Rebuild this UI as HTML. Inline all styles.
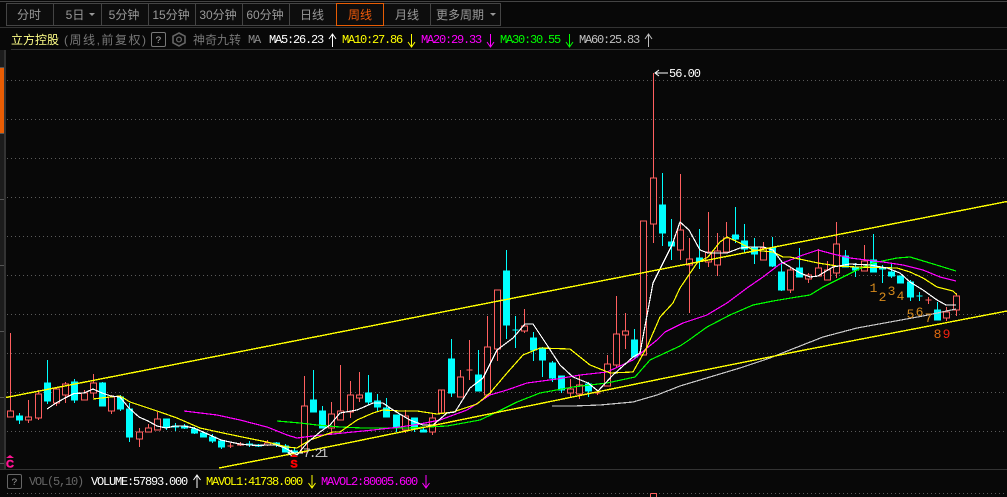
<!DOCTYPE html>
<html><head><meta charset="utf-8"><style>
html,body{margin:0;padding:0;background:#080808;width:1007px;height:497px;overflow:hidden}
svg{display:block}
.c{font-family:"Liberation Sans","Noto Sans CJK SC",sans-serif;font-size:12px}
.m{font-family:"Liberation Mono",monospace;font-size:12px;letter-spacing:-1.2px}
.t{text-anchor:middle;fill:#999}
</style></head><body>
<svg width="1007" height="497" viewBox="0 0 1007 497" xmlns="http://www.w3.org/2000/svg">
<rect width="1007" height="497" fill="#080808"/>
<!-- frame -->
<g shape-rendering="crispEdges">
<rect x="0" y="1" width="1007" height="1" fill="#444"/>
<rect x="0" y="27" width="1007" height="1" fill="#333"/>
<rect x="11" y="49" width="996" height="1" fill="#333"/>
<rect x="0" y="469" width="1007" height="1" fill="#333"/>
<rect x="0" y="50" width="4" height="419" fill="#1c1c1c"/>
<rect x="4" y="50" width="2" height="419" fill="#333"/>
<rect x="0" y="68" width="4" height="65" fill="#e85d04"/>
<rect x="0" y="67" width="4" height="1" fill="#555"/><rect x="0" y="133" width="4" height="1" fill="#555"/><rect x="0" y="199" width="4" height="1" fill="#555"/><rect x="0" y="265" width="4" height="1" fill="#555"/><rect x="0" y="331" width="4" height="1" fill="#555"/><rect x="0" y="397" width="4" height="1" fill="#555"/><rect x="0" y="463" width="4" height="1" fill="#555"/>
<!-- toolbar -->
<rect x="6.5" y="3.5" width="494" height="22" fill="#0d0d0d" stroke="#444"/>
<path d="M53.5 4V25M101.5 4V25M148.5 4V25M195.5 4V25M242.5 4V25M289.5 4V25M430.5 4V25" stroke="#444" fill="none"/>
<rect x="336.5" y="3.5" width="47" height="22" fill="#0d0d0d" stroke="#e85d04"/>
<!-- grid -->
<g stroke="#5a5a5a" stroke-dasharray="1 3" fill="none">
<path d="M7 80.5H1007M7 119.5H1007M7 158.5H1007M7 197.5H1007M7 236.5H1007M7 275.5H1007M7 314.5H1007M7 353.5H1007M7 392.5H1007M7 431.5H1007M7 493.5H1007"/>
</g>
<!-- red candles -->
<path fill="#080808" stroke="#ff5f5f" d="M10.5 333V411M7.5 411H13.5V417H7.5Z
M28.5 400V417M28.5 420V423M25.5 417H31.5V420H25.5Z
M38.5 390V394M38.5 418V420M35.5 394H41.5V418H35.5Z
M56.5 387V389M56.5 403V406M53.5 389H59.5V403H53.5Z
M65.5 382V384M65.5 395V403M62.5 384H68.5V395H62.5Z
M84.5 390V393M81.5 393H87.5V400H81.5Z
M93.5 374V383M93.5 393V398M90.5 383H96.5V393H90.5Z
M111.5 395V397M111.5 411V414M108.5 397H114.5V411H108.5Z
M139.5 428V432M139.5 439V447M136.5 432H142.5V439H136.5Z
M148.5 424V428M145.5 428H151.5V432H145.5Z
M157.5 412V419M154.5 419H160.5V430H154.5Z
M230.5 443V448M227.5 446H233.5
M240.5 442V446M237.5 444H243.5V445H237.5Z
M267.5 440V443M267.5 445V446M264.5 443H270.5V445H264.5Z
M304.5 376V406M304.5 452V453M301.5 406H307.5V452H301.5Z
M331.5 402V414M331.5 428V435M328.5 414H334.5V428H328.5Z
M340.5 365V411M337.5 411H343.5V420H337.5Z
M350.5 381V395M350.5 412V418M347.5 395H353.5V412H347.5Z
M359.5 372V395M359.5 398V402M356.5 395H362.5V398H356.5Z
M405.5 410V416M405.5 430V433M402.5 416H408.5V430H402.5Z
M432.5 413V418M432.5 432V435M429.5 418H435.5V432H429.5Z
M441.5 390V413M438.5 390H444.5V413H438.5Z
M460.5 370V377M457.5 377H463.5V397H457.5Z
M469.5 340V380M466.5 370H472.5
M487.5 316V347M484.5 347H490.5V395H484.5Z
M497.5 349V361M494.5 290H500.5V349H494.5Z
M524.5 309V326M524.5 331V333M521.5 326H527.5V331H521.5Z
M570.5 379V389M570.5 393V398M567.5 389H573.5V393H567.5Z
M579.5 375V385M579.5 394V399M576.5 385H582.5V394H576.5Z
M597.5 390V395M594.5 393H600.5
M607.5 355V364M604.5 364H610.5V386H604.5Z
M616.5 296V334M616.5 365V367M613.5 334H619.5V365H613.5Z
M625.5 313V331M625.5 335V349M622.5 331H628.5V335H622.5Z
M640.5 221H646.5V355H640.5Z
M653.5 73V178M653.5 224V243M650.5 178H656.5V224H650.5Z
M680.5 174V230M680.5 250V260M677.5 230H683.5V250H677.5Z
M689.5 238V259M689.5 265V313M686.5 259H692.5V265H686.5Z
M708.5 212V252M708.5 262V267M705.5 252H711.5V262H705.5Z
M717.5 233V251M717.5 265V276M714.5 251H720.5V265H714.5Z
M726.5 222V238M723.5 238H729.5V252H723.5Z
M763.5 242V248M760.5 248H766.5V260H760.5Z
M790.5 267V270M790.5 290V293M787.5 270H793.5V290H787.5Z
M808.5 273V275M808.5 279V283M805.5 275H811.5V279H805.5Z
M818.5 249V268M815.5 268H821.5V276H815.5Z
M827.5 261V270M824.5 270H830.5V280H824.5Z
M836.5 222V244M836.5 273V278M833.5 244H839.5V273H833.5Z
M864.5 245V261M861.5 261H867.5V271H861.5Z
M928.5 297V304M925.5 300H931.5
M946.5 307V312M946.5 318V321M943.5 312H949.5V318H943.5Z
M956.5 293V296M956.5 310V316M953.5 296H959.5V310H953.5Z
M650.5 493.5H656.5V497M650.5 493.5V497"/>
<!-- cyan candles -->
<path fill="#00ffff" stroke="#00ffff" d="M19.5 413V424M16.5 416H22.5V420H16.5Z
M47.5 360V404M44.5 383H50.5V401H44.5Z
M74.5 379V403M71.5 382H77.5V400H71.5Z
M102.5 382V406M99.5 383H105.5V406H99.5Z
M120.5 395V411M117.5 397H123.5V409H117.5Z
M129.5 403V442M126.5 409H132.5V437H126.5Z
M166.5 419V430M163.5 419H169.5V427H163.5Z
M175.5 423V431M172.5 426H178.5V427H172.5Z
M184.5 424V429M181.5 426H187.5V428H181.5Z
M194.5 427V434M191.5 429H197.5V433H191.5Z
M203.5 432V437M200.5 433H206.5V437H200.5Z
M212.5 434V443M209.5 437H215.5V441H209.5Z
M221.5 440V449M218.5 441H224.5V447H218.5Z
M249.5 441V447M246.5 444H252.5V445H246.5Z
M258.5 444V447M255.5 445H261.5V446H255.5Z
M276.5 442V447M273.5 443H279.5V445H273.5Z
M285.5 444V452M282.5 446H288.5V452H282.5Z
M294.5 448V455M291.5 451H297.5V452H291.5Z
M313.5 370V412M310.5 400H316.5V412H310.5Z
M322.5 406V428M319.5 411H325.5V428H319.5Z
M368.5 375V405M365.5 393H371.5V402H365.5Z
M377.5 394V411M374.5 401H380.5V407H374.5Z
M386.5 398V417M383.5 408H389.5V417H383.5Z
M396.5 415V432M393.5 415H399.5V428H393.5Z
M414.5 418V432M411.5 418H417.5V429H411.5Z
M423.5 427V432M420.5 430H426.5V432H420.5Z
M451.5 339V397M448.5 359H454.5V393H448.5Z
M478.5 350V391M475.5 375H481.5V391H475.5Z
M506.5 250V339M503.5 271H509.5V325H503.5Z
M515.5 316V348M512.5 330H518.5
M533.5 332V361M530.5 338H536.5V350H530.5Z
M542.5 347V377M539.5 349H545.5V360H539.5Z
M552.5 361V382M549.5 363H555.5V378H549.5Z
M561.5 376V393M558.5 376H564.5V390H558.5Z
M588.5 382V397M585.5 384H591.5V391H585.5Z
M634.5 329V357M631.5 340H637.5V357H631.5Z
M662.5 173V246M659.5 205H665.5V233H659.5Z
M671.5 219V260M668.5 242H674.5V246H668.5Z
M699.5 229V269M696.5 258H702.5V261H696.5Z
M735.5 207V243M732.5 235H738.5V239H732.5Z
M744.5 224V253M741.5 241H747.5V249H741.5Z
M754.5 238V264M751.5 247H757.5V254H751.5Z
M772.5 237V267M769.5 248H775.5V266H769.5Z
M781.5 262V291M778.5 272H784.5V290H778.5Z
M799.5 248V277M796.5 268H802.5V277H796.5Z
M845.5 250V267M842.5 256H848.5V267H842.5Z
M855.5 263V277M852.5 268H858.5V270H852.5Z
M873.5 234V272M870.5 260H876.5V272H870.5Z
M882.5 265V283M879.5 268H885.5V269H879.5Z
M891.5 264V278M888.5 272H894.5V276H888.5Z
M900.5 276V283M897.5 276H903.5V283H897.5Z
M910.5 280V301M907.5 282H913.5V297H907.5Z
M919.5 292V301M916.5 296H922.5
M937.5 302V320M934.5 310H940.5V320H934.5Z"/>
</g>
<!-- moving averages -->
<g fill="none" stroke-width="1.2" stroke-linejoin="round" shape-rendering="crispEdges">
<polyline stroke="#c8c8c8" points="552,406 573,406 600,405 633,402 657,395 680,386 710,377 740,368 770,358 795,348 823,337 857,328 890,322 923,316 956,309"/>
<polyline stroke="#00ff00" points="277,421 300,423 317,425 340,427 363,428 407,428 447,426 480,420 497,412 517,402 540,393 573,387 607,383 635,377 650,360 680,346 689,340 707,327 730,315 753,305 773,301 797,297 810,295 823,287 857,270 873,263 897,258 910,257 930,263 956,271"/>
<polyline stroke="#ff00ff" points="184,411 217,415 240,420 267,427 287,435 297,438 313,436 333,434 373,430 400,427 420,424 440,420 467,410 490,395 507,390 527,383 557,379 580,375 607,372 633,360 647,348 657,340 665,332 683,323 707,315 727,303 747,288 763,277 780,264 803,255 818,250 833,254 850,258 883,262 903,265 923,270 940,277 956,281"/>
<polyline stroke="#ffff00" points="93,399 110,397 120,396 130,402 160,412 177,418 200,428 223,433 247,438 267,442 287,447 297,448 310,440 333,432 340,432 357,420 373,413 383,410 400,411 417,411 437,414 453,412 477,404 490,393 507,373 523,355 540,348 570,349 580,357 590,365 610,373 633,372 647,347 660,317 673,303 680,288 697,263 708,257 720,242 727,237 740,243 753,250 773,252 783,257 790,257 818,263 837,266 857,267 897,268 910,272 923,278 937,287 953,291 957,295"/>
<polyline stroke="#ffffff" points="47,409 56,403 65,398 74,393.5 84,393 93,389 102,393 111,396 120,397 129,408 139,417 148,421 157,426 166,428 175,426 184,426 194,428 203,432 221,440 230,442 240,444 249,445 258,445.5 267,445 276,445 285,448 294,453 297,455 307,443 320,432 330,425 340,413 357,410 373,403 383,403 393,410 410,420 423,425 433,425 447,413 455,412 470,388 483,378 497,350 513,338 525,324 533,324 547,345 560,365 573,377 588,383 598,391 613,375 633,357 640,353 653,283 672,245 680,222 689,230 700,250 708,253 727,253 740,248 750,247 763,247 773,250 782,262 800,273 810,277 818,276 833,267 850,264 870,265 887,268 900,273 910,282 923,290 937,300 946,305 956,305"/>
<polyline stroke="#ffff00" stroke-width="1.4" points="6,397.5 340,332 680,265.5 1007,201.5"/>
<polyline stroke="#ffff00" stroke-width="1.4" points="219,468 340,444.5 680,375 807,349.5 1007,311"/>
</g>
<!-- high/low labels -->
<path d="M668 73H655M659 70L655 73L659 76" fill="none" stroke="#fff"/>
<text x="669" y="77" class="m" fill="#fff" style="letter-spacing:-1px">56.00</text>
<path d="M303 453H288M292 450L288 453L292 456" fill="none" stroke="#fff"/>
<text x="303" y="457" class="m" fill="#ccc" style="font-size:13px;letter-spacing:-2px">7.21</text>
<!-- nine-turn numbers -->
<g class="m" style="font-size:13px;letter-spacing:0" text-anchor="middle">
<text x="873.5" y="292" fill="#d68a1c">1</text><text x="882.5" y="301" fill="#d68a1c">2</text><text x="891.5" y="295" fill="#d68a1c">3</text><text x="900.5" y="300" fill="#d68a1c">4</text><text x="910.5" y="318" fill="#d68a1c">5</text><text x="919.5" y="316" fill="#d68a1c">6</text><text x="928.5" y="322" fill="#d68a1c">7</text><text x="937.5" y="338" fill="#e06a10">8</text><text x="946.5" y="338" fill="#f02010">9</text>
</g>
<!-- C / S markers -->
<path d="M10 455L14 458H6Z" fill="#ff1493"/><path d="M294 454L298 457H290Z" fill="#ff0000"/>
<text x="10" y="467.5" text-anchor="middle" font-family="Liberation Sans" font-weight="bold" font-size="11" fill="#ff1493" stroke="#ff1493" stroke-width=".5">C</text>
<text x="294" y="467.5" text-anchor="middle" font-family="Liberation Sans" font-weight="bold" font-size="11" fill="#ff0000" stroke="#ff0000" stroke-width=".5">S</text>
<!-- toolbar text -->
<g class="c">
<text class="t" x="29" y="19">分时</text>
<text class="t" x="75" y="19">5日</text>
<path d="M89 13H95L92 16Z" fill="#999"/>
<text class="t" x="124" y="19">5分钟</text>
<text class="t" x="171" y="19">15分钟</text>
<text class="t" x="218" y="19">30分钟</text>
<text class="t" x="265" y="19">60分钟</text>
<text class="t" x="312" y="19">日线</text>
<text class="t" x="360" y="19" style="fill:#f05a0a">周线</text>
<text class="t" x="407" y="19">月线</text>
<text class="t" x="460" y="19">更多周期</text>
<path d="M490 13H496L493 16Z" fill="#999"/>
<text x="11" y="44" fill="#ffff88">立方控股</text>
<text x="64" y="44" fill="#777" textLength="82">(周线,前复权)</text>
<text x="193" y="44" fill="#777">神奇九转</text>
</g>
<rect x="151.5" y="32.5" width="14" height="14" rx="1.5" fill="none" stroke="#777"/>
<text x="158.5" y="43" text-anchor="middle" font-family="Liberation Mono" font-size="10" fill="#aaa">?</text>
<path d="M179 33L185 36.2V42.8L179 46L173 42.8V36.2Z" fill="none" stroke="#666" stroke-width="1.6"/>
<circle cx="179" cy="39.5" r="2.4" fill="none" stroke="#666" stroke-width="1.3"/>
<!-- MA legend -->
<g class="m">
<text x="248" y="43" fill="#888">MA</text>
<text x="269" y="43" fill="#fff">MA5:26.23</text>
<text x="342" y="43" fill="#ffff00">MA10:27.86</text>
<text x="421" y="43" fill="#ff00ff">MA20:29.33</text>
<text x="500" y="43" fill="#00ff00">MA30:30.55</text>
<text x="579" y="43" fill="#c0c0c0">MA60:25.83</text>
</g>
<g fill="none">
<path d="M332.5 47V34M329 39L332.5 34L336 39" stroke="#fff"/>
<path d="M411.5 34V47M408 42L411.5 47L415 42" stroke="#ffff00"/>
<path d="M490.5 34V47M487 42L490.5 47L494 42" stroke="#ff00ff"/>
<path d="M569.5 34V47M566 42L569.5 47L573 42" stroke="#00ff00"/>
<path d="M648.5 47V34M645 39L648.5 34L652 39" stroke="#c0c0c0"/>
</g>
<!-- volume header -->
<rect x="7.5" y="474.5" width="14" height="14" rx="1.5" fill="none" stroke="#666"/>
<text x="14.5" y="485" text-anchor="middle" font-family="Liberation Mono" font-size="10" fill="#999">?</text>
<g class="m">
<text x="29" y="485" fill="#666">VOL(5,10)</text>
<text x="91" y="485" fill="#fff">VOLUME:57893.000</text>
<text x="206" y="485" fill="#ffff00">MAVOL1:41738.000</text>
<text x="321" y="485" fill="#ff00ff">MAVOL2:80005.600</text>
</g>
<g fill="none">
<path d="M197 488V475M193.5 480L197 475L200.5 480" stroke="#fff"/>
<path d="M312 475V488M308.5 483L312 488L315.5 483" stroke="#ffff00"/>
<path d="M426 475V488M422.5 483L426 488L429.5 483" stroke="#ff00ff"/>
</g>
</svg>
</body></html>
